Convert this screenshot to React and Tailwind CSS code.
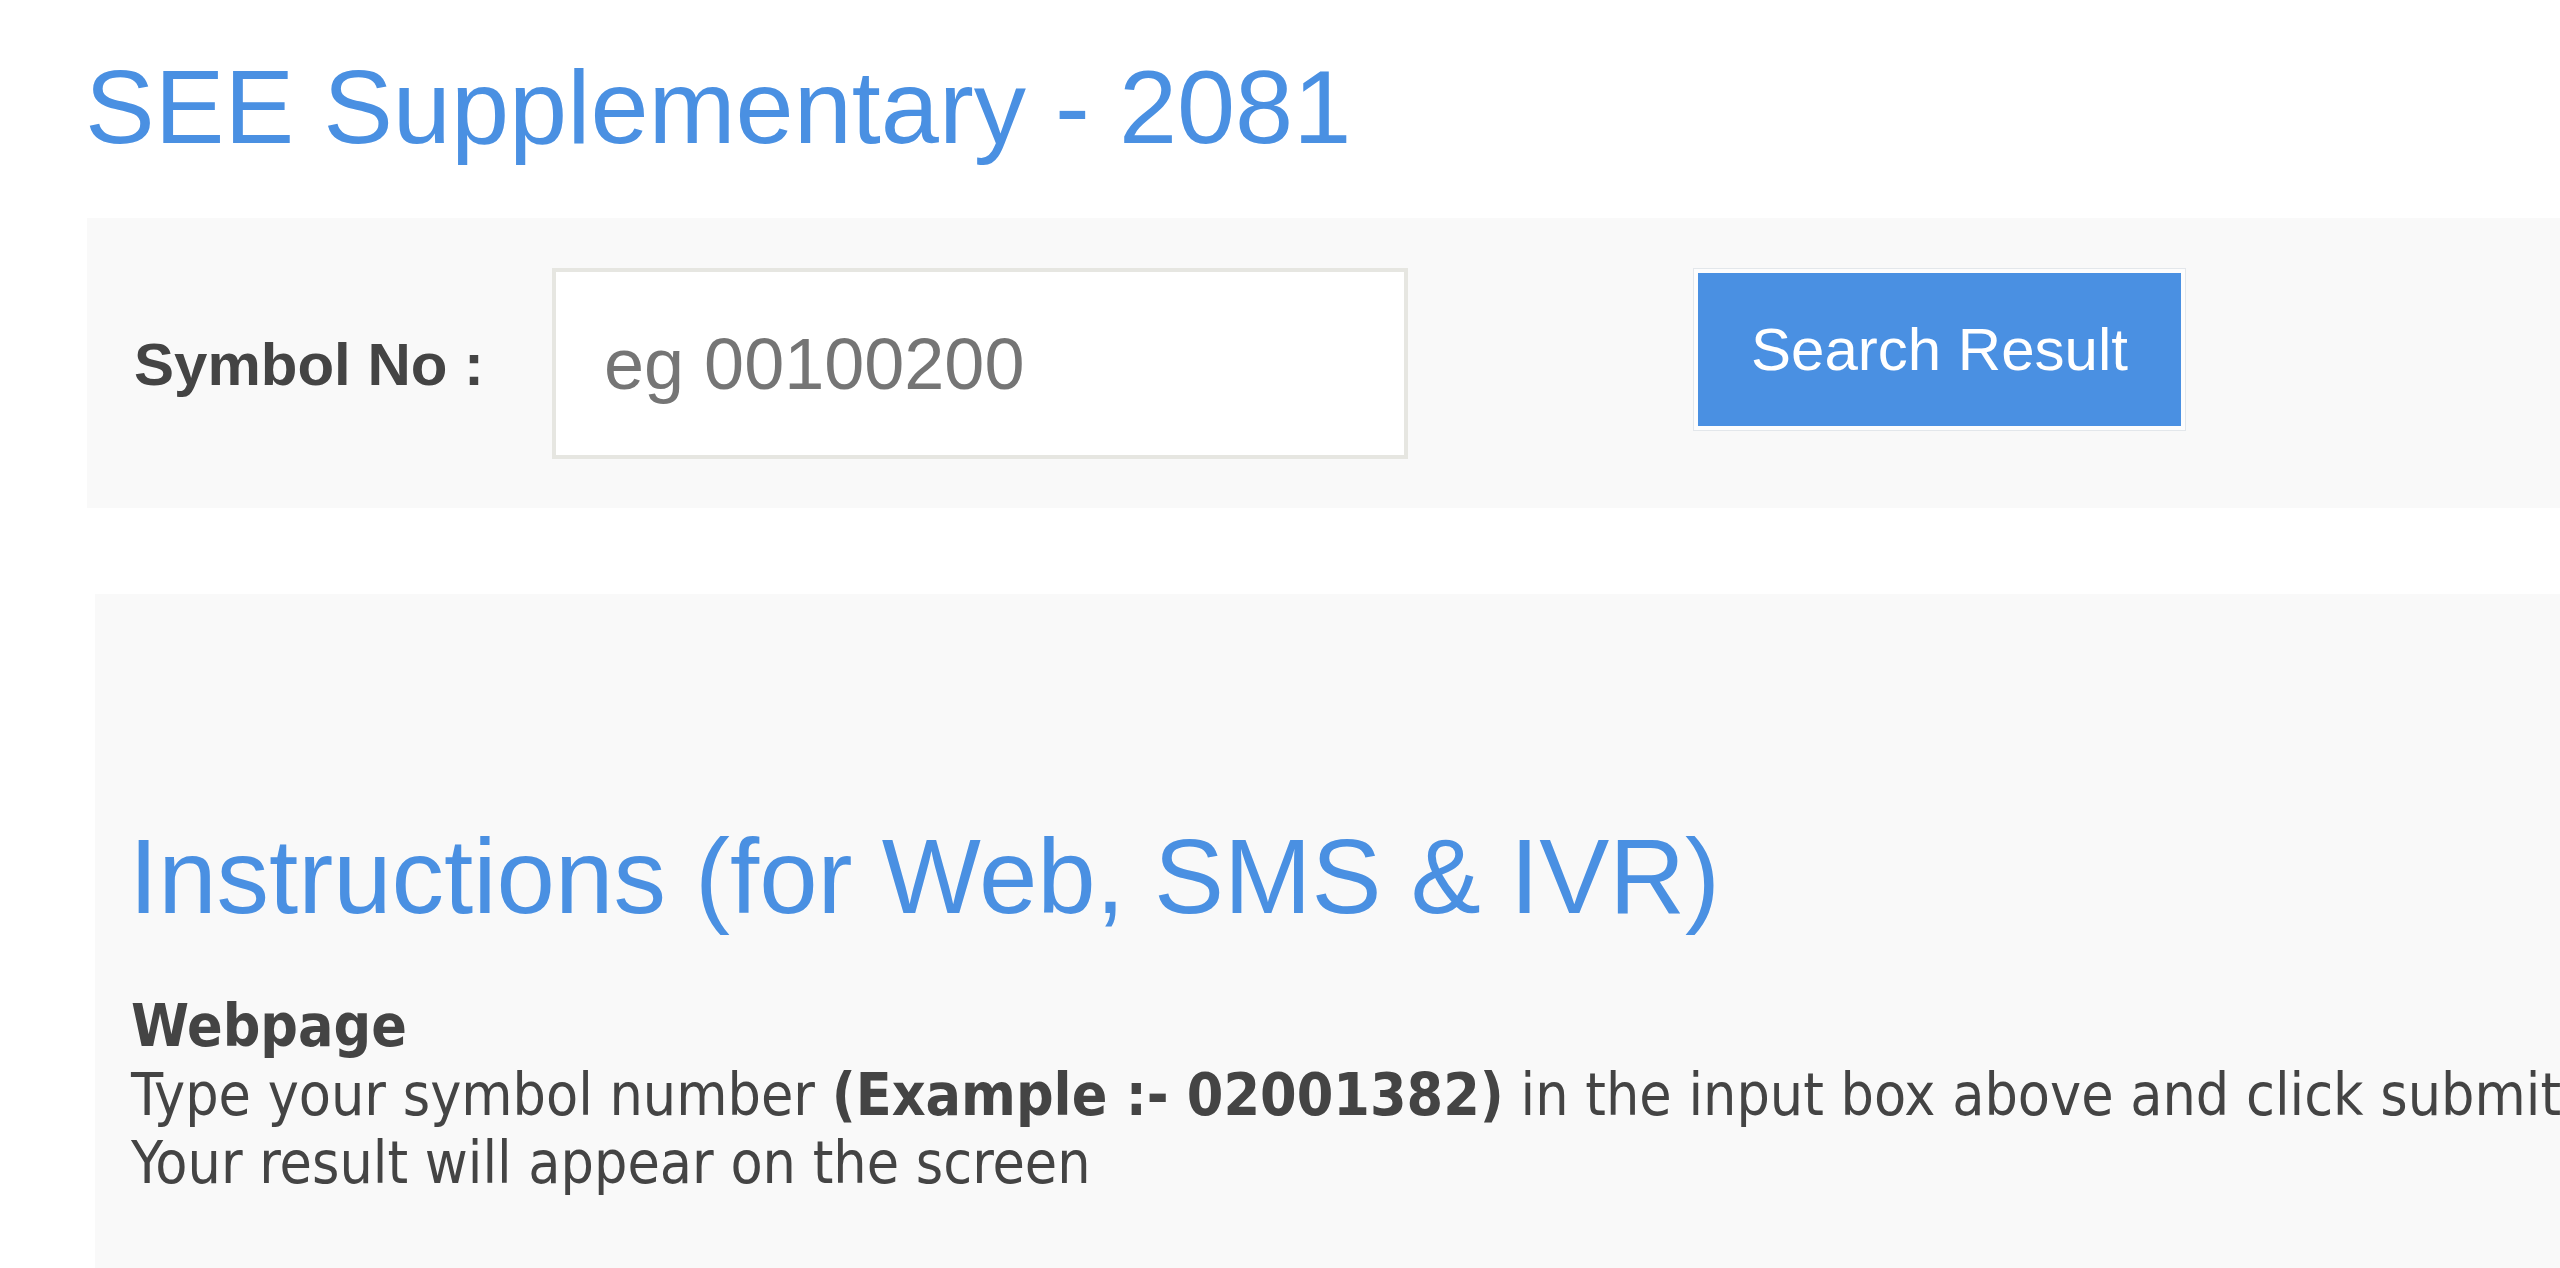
export default function App() {
  const sans = { fontFamily: '"Liberation Sans", Arial, sans-serif' };
  return (
    <div className="min-h-screen w-full bg-white overflow-hidden" style={sans}>
      <h1 className="pl-[85px] pt-[54px] text-[104.5px] leading-[105px] font-normal text-[#4a90e2] whitespace-nowrap">
        SEE Supplementary - 2081
      </h1>

      <div className="ml-[87px] mt-[59px] flex items-start bg-[#f9f9f9] pl-[47px] pt-[50px] pb-[49px]">
        <label className="flex h-[191px] items-center pt-[3px] whitespace-nowrap text-[60px] font-bold text-[#444444]">
          Symbol No :
        </label>
        <input
          type="text"
          placeholder="eg 00100200"
          className="ml-[68px] h-[191px] w-[856px] border-4 border-[#e6e6e1] bg-white pl-[48px] text-[72px] text-[#444444] outline-none placeholder:text-[#757575]"
          style={sans}
        />
        <button
          type="button"
          className="ml-[286px] mt-[1px] flex h-[161px] w-[491px] items-center justify-center border-4 border-[#fdfdfd] bg-[#4a90e2] text-[60px] text-white ring-1 ring-[#e3e7eb]"
          style={sans}
        >
          Search Result
        </button>
      </div>

      <div className="ml-[95px] mt-[86px] bg-[#f9f9f9] pl-[34px] pt-[230px] pb-[200px]">
        <h2 className="text-[105px] leading-[105px] font-normal text-[#4a90e2] whitespace-nowrap">
          Instructions (for Web, SMS &amp; IVR)
        </h2>
        <div
          className="ml-[2px] mt-[63px] text-[58.5px] leading-[68.5px] text-[#444444]"
          style={{ fontFamily: '"DejaVu Sans Condensed", "DejaVu Sans", sans-serif' }}
        >
          <div className="whitespace-nowrap font-bold">Webpage</div>
          <div className="whitespace-nowrap">
            Type your symbol number <span className="font-bold">(Example :- 02001382)</span> in the input box above and click submit
          </div>
          <div className="whitespace-nowrap">Your result will appear on the screen</div>
        </div>
      </div>
    </div>
  );
}
